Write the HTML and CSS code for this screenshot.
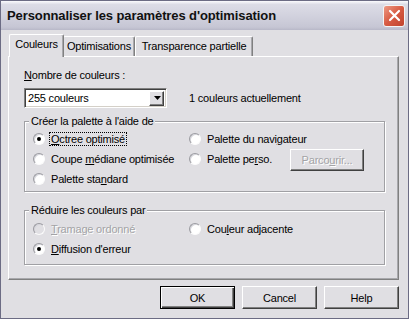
FILE: index.html
```html
<!DOCTYPE html>
<html lang="fr">
<head>
  <meta charset="UTF-8">
  <meta name="viewport" content="width=device-width, initial-scale=1.0">
  <title>Personnaliser les paramètres d'optimisation</title>
  <link rel="stylesheet" href="styles.css">
</head>
<body>
  <div class="window">
    <header class="titlebar">
      <span class="title">Personnaliser les paramètres d'optimisation</span>
      <span class="close">
        <svg width="13" height="13" viewBox="0 0 13 13">
          <path d="M2 2 L11 11 M11 2 L2 11" stroke="#fff" stroke-width="2.2" stroke-linecap="round"/>
        </svg>
      </span>
    </header>

    <div class="client">
      <ul class="tabs">
        <li class="tab tab-colors active">Couleurs</li>
        <li class="tab tab-optim">Optimisations</li>
        <li class="tab tab-transp">Transparence partielle</li>
      </ul>

      <section class="panel">
        <div class="field-label"><u>N</u>ombre de couleurs :</div>
        <div class="combo-row">
          <div class="combo">
            <span class="combo-value">255 couleurs</span>
            <span class="combo-btn">
              <svg width="7" height="4" viewBox="0 0 7 4"><path d="M0 0 H7 L3.5 4 Z" fill="#000"/></svg>
            </span>
          </div>
          <span class="hint">1 couleurs actuellement</span>
        </div>

        <!-- Palette -->
        <fieldset class="group palette">
          <legend>Créer la palette à l'aide de</legend>
          <label class="radio"><span class="dot checked"></span><span class="focus"><u>O</u>ctree optimisé</span></label>
          <label class="radio"><span class="dot"></span><span>Palette du navi<u>g</u>ateur</span></label>
          <span></span>
          <label class="radio"><span class="dot"></span><span>Coupe <u>m</u>édiane optimisée</span></label>
          <label class="radio"><span class="dot"></span><span>Palette pe<u>r</u>so.</span></label>
          <span class="btn browse disabled">Parco<u>u</u>rir...</span>
          <label class="radio"><span class="dot"></span><span>Palette sta<u>n</u>dard</span></label>
        </fieldset>

        <!-- Réduction -->
        <fieldset class="group reduce">
          <legend>Réduire les couleurs par</legend>
          <label class="radio disabled"><span class="dot"></span><span><u>T</u>ramage ordonné</span></label>
          <label class="radio"><span class="dot"></span><span>Cou<u>l</u>eur adjacente</span></label>
          <label class="radio"><span class="dot checked"></span><span><u>D</u>iffusion d'erreur</span></label>
        </fieldset>
      </section>

      <footer class="buttons">
        <span class="btn default">OK</span>
        <span class="btn">Cancel</span>
        <span class="btn">Help</span>
      </footer>
    </div>
  </div>
</body>
</html>
```

FILE: styles.css
```css
* {
  margin: 0;
  padding: 0;
  box-sizing: border-box;
}

body {
  font-family: "Liberation Sans", Arial, sans-serif;
  font-size: 11px;
  letter-spacing: -0.2px;
  color: #000;
  background: #e0dfe3;
}

u {
  text-decoration: underline;
  text-underline-offset: 1px;
}

.window {
  width: 409px;
  height: 319px;
  border: 1px solid #6c6c84;
  background: #e0dfe3;
  display: flex;
  flex-direction: column;
}

/* Barre de titre */
.titlebar {
  height: 29px;
  display: flex;
  align-items: center;
  justify-content: space-between;
  padding: 0 3px 0 6px;
  background: linear-gradient(#fbfbfd 0%, #dcdce6 12%, #d2d2de 50%, #c6c6d4 90%, #b8b8c8 100%);
}

.title {
  font-size: 13px;
  font-weight: bold;
  color: #111;
  letter-spacing: -0.1px;
}

.close {
  width: 22px;
  height: 22px;
  border: 1px solid #f4f4f4;
  border-radius: 3px;
  background: linear-gradient(135deg, #ee9a84 0%, #d75a42 50%, #c0432e 100%);
  display: flex;
  align-items: center;
  justify-content: center;
}

.client {
  flex: 1;
  padding: 4px 9px 0 7px;
  display: flex;
  flex-direction: column;
}

/* Onglets */
.tabs {
  list-style: none;
  display: flex;
  align-items: flex-end;
  height: 22px;
  padding-left: 3px;
}

.tab {
  height: 20px;
  padding-top: 3px;
  text-align: center;
  border: 1px solid #fff;
  border-right: 1px solid #808080;
  border-bottom: none;
  border-radius: 2px 2px 0 0;
  box-shadow: inset -1px 0 #a8a8ac;
}

.tab-colors { width: 51px; }
.tab-optim { width: 72px; }
.tab-transp { width: 118px; }

.tab.active {
  width: 55px;
  height: 23px;
  margin: 0 -1px -1px -2px;
  background: #e0dfe3;
  position: relative;
  z-index: 1;
}

.panel {
  height: 224px;
  border: 1px solid #fff;
  border-right-color: #808080;
  border-bottom-color: #808080;
  box-shadow: inset -1px -1px #a8a8ac;
  padding: 12px 13px 0 15px;
}

.field-label {
  height: 13px;
  line-height: 13px;
}

.combo-row {
  display: flex;
  align-items: center;
  margin-top: 6px;
}

.combo {
  width: 143px;
  height: 20px;
  background: #fff;
  border: 1px solid #808080;
  border-right-color: #fff;
  border-bottom-color: #fff;
  box-shadow: inset 1px 1px #404040, inset -1px -1px #d4d0c8;
  display: flex;
  align-items: center;
  justify-content: space-between;
  padding: 2px 2px 2px 3px;
}

.combo-btn {
  width: 15px;
  height: 15px;
  background: #e0dfe3;
  border: 1px solid #fff;
  border-right-color: #404040;
  border-bottom-color: #404040;
  box-shadow: inset -1px -1px #808080;
  display: flex;
  align-items: center;
  justify-content: center;
  padding-left: 1px;
}

.hint {
  margin-left: 22px;
}

/* Groupes */
.group {
  border: 1px solid #a0a0a4;
  box-shadow: inset 1px 1px #fff, 1px 1px #fff;
  display: grid;
  grid-template-columns: 156px 101px 1fr;
  grid-auto-rows: 20px;
  align-items: center;
  min-inline-size: 0;
  padding: 1px 8px 2px 8px;
}

.group legend {
  margin-left: -4px;
  padding: 0 2px;
  line-height: 13px;
  background: #e0dfe3;
}

.palette {
  margin-top: 7px;
}

.reduce {
  grid-template-columns: 156px 1fr;
  margin-top: 12px;
  padding-top: 2px;
  padding-bottom: 5px;
}

.radio {
  display: flex;
  align-items: center;
  white-space: nowrap;
}

.dot {
  width: 12px;
  height: 12px;
  border-radius: 50%;
  background: #fff;
  border: 1px solid #9a9aa0;
  border-right-color: #fbfbfb;
  border-bottom-color: #fbfbfb;
  box-shadow: inset 1px 1px #d6d6dc;
  margin-right: 6px;
  display: flex;
  align-items: center;
  justify-content: center;
  flex: none;
}

.dot.checked::after {
  content: "";
  width: 4px;
  height: 4px;
  border-radius: 50%;
  background: #000;
}

.radio.disabled {
  color: #a3a3a6;
  text-shadow: 1px 1px #fff;
}

.radio.disabled .dot {
  background: #e0dfe3;
}

.focus {
  outline: 1px dotted #000;
  outline-offset: 0;
  padding: 0 1px;
  margin-left: -1px;
}

/* Boutons */
.btn {
  width: 75px;
  height: 23px;
  display: flex;
  align-items: center;
  justify-content: center;
  background: #e0dfe3;
  border: 1px solid #fff;
  border-right-color: #404040;
  border-bottom-color: #404040;
  box-shadow: inset -1px -1px #808080;
}

.btn.default {
  border: 1px solid #000;
  box-shadow: inset 1px 1px #fff, inset -1px -1px #404040, inset -2px -2px #808080;
}

.btn.disabled {
  color: #a3a3a6;
  text-shadow: 1px 1px #fff;
}

.browse {
  width: 74px;
  height: 22px;
  margin-top: 1px;
}

.buttons {
  display: flex;
  justify-content: flex-end;
  gap: 7px;
  margin-top: 6px;
}
```
